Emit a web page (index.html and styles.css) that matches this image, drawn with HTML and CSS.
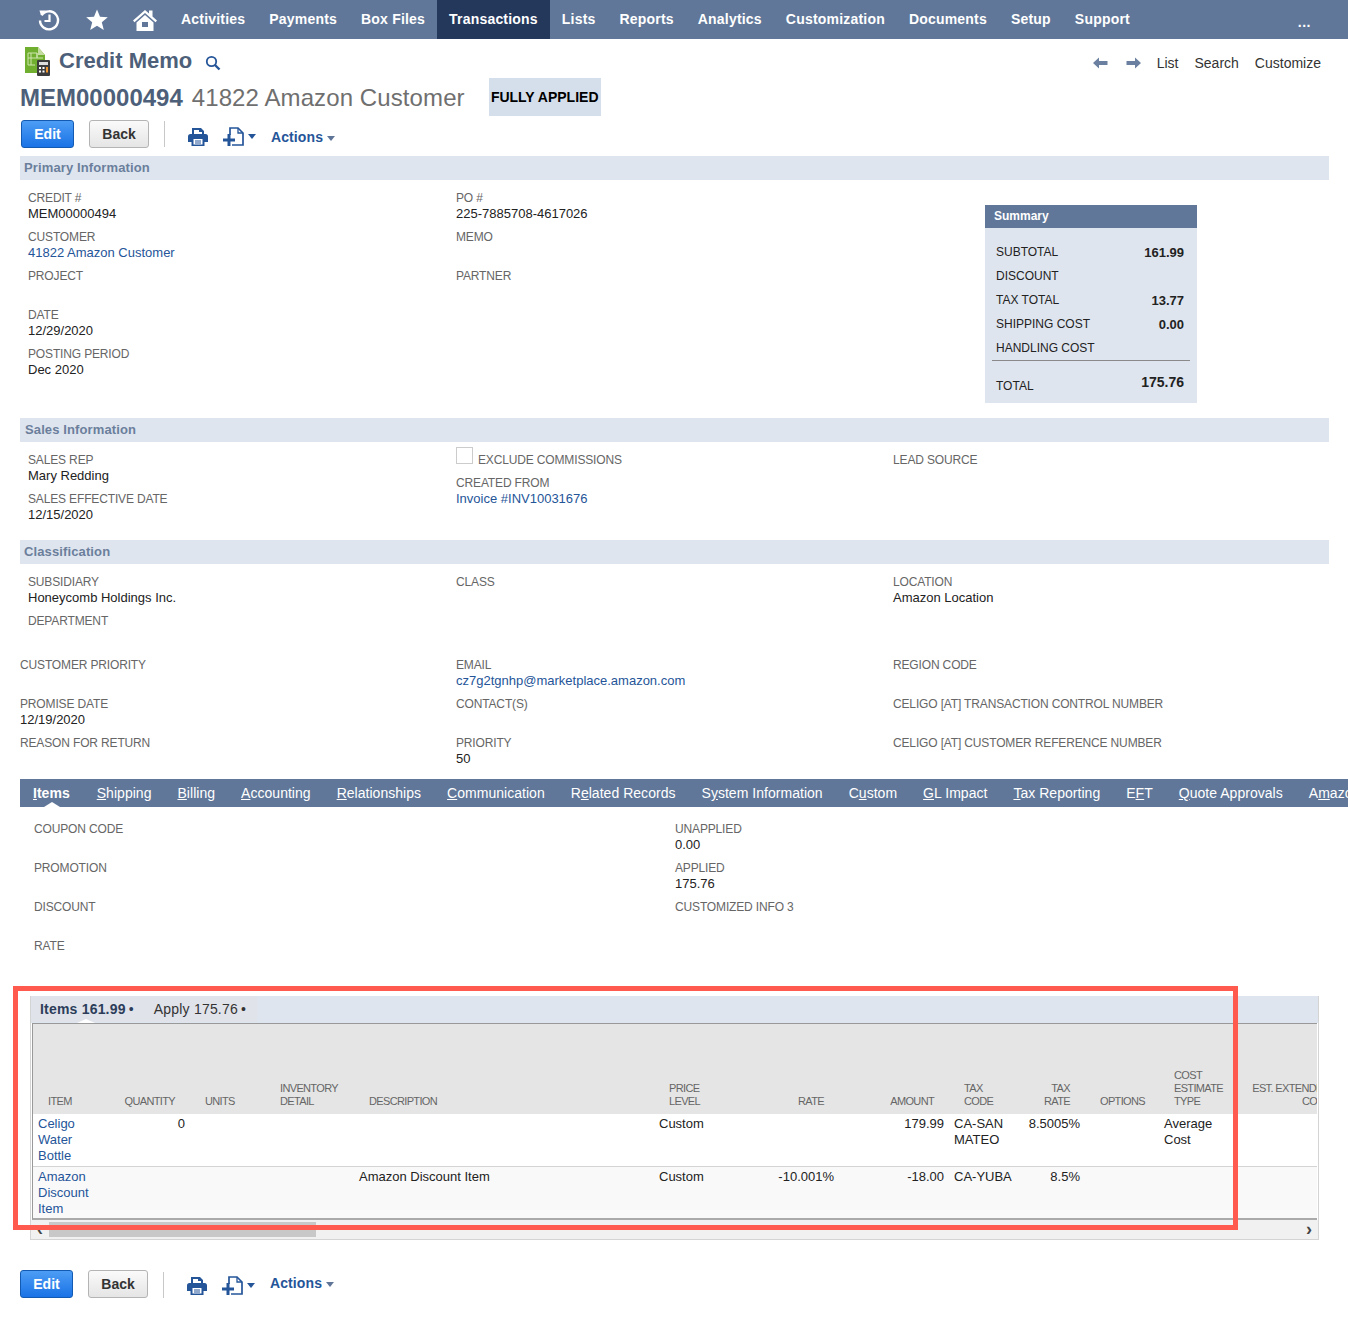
FILE: index.html
```html
<!DOCTYPE html>
<html lang="en">
<head>
    <meta charset="UTF-8">
    <meta name="viewport" content="width=device-width, initial-scale=1.0">
    <title>Credit Memo</title>
    <link rel="stylesheet" href="styles.css">
</head>
<body>
    <!-- Top navigation -->
    <nav class="topnav">
        <a class="nav-icon" href="#">
            <svg width="24" height="24" viewBox="0 0 24 24"><path d="M4.600 7.200A9 9 0 1 1 3 12.500" fill="none" stroke="#fff" stroke-width="2.400"/><path d="M2.500 2.500l6.500 0 -5 5z" fill="#fff"/><path d="M12.500 6.500v6.500h-5" fill="none" stroke="#fff" stroke-width="2.200"/></svg>
        </a>
        <a class="nav-icon" href="#">
            <svg width="24" height="24" viewBox="0 0 24 24"><path d="M12 1.500l3 7.300 7.800.5-6 5 2 7.700L12 17.700 5.200 22l2-7.700-6-5 7.800-.5z" fill="#fff"/></svg>
        </a>
        <a class="nav-icon" href="#">
            <svg width="26" height="24" viewBox="0 0 26 24"><path d="M1 12.500L13 2l4 3.500V2.500h3.500v6L25 12.500l-1.500 1.700L13 5 2.500 14.200z" fill="#fff"/><path d="M4.500 14.500L13 7l8.500 7.500V23h-17zM10 14v5h6v-5z" fill="#fff" fill-rule="evenodd"/></svg>
        </a>
        <a class="nav-link" href="#">Activities</a>
        <a class="nav-link" href="#">Payments</a>
        <a class="nav-link" href="#">Box Files</a>
        <a class="nav-link active" href="#">Transactions</a>
        <a class="nav-link" href="#">Lists</a>
        <a class="nav-link" href="#">Reports</a>
        <a class="nav-link" href="#">Analytics</a>
        <a class="nav-link" href="#">Customization</a>
        <a class="nav-link" href="#">Documents</a>
        <a class="nav-link" href="#">Setup</a>
        <a class="nav-link" href="#">Support</a>
        <a class="nav-more" href="#">...</a>
    </nav>

    <div class="page">
        <div class="title-row">
            <div class="title-left">
                <svg class="title-icon" width="27" height="30" viewBox="0 0 27 30">
                    <path d="M1 1h13l7 8v18H1z" fill="#6fae2e"/>
                    <path d="M14 1l7 8h-7z" fill="#c5dca0"/>
                    <path d="M4 7h9v5h6M4 7v12h7M7 7v12M4 12h9v-5" fill="none" stroke="#cfe5ae" stroke-width="1"/>
                    <rect x="13" y="14" width="13" height="16" rx="1" fill="#3c3c3c"/>
                    <rect x="15" y="16" width="9" height="3" fill="#ddd"/>
                    <path d="M15 21h2v2h-2zM18.500 21h2v2h-2zM15 24.500h2v2h-2zM18.500 24.500h2v2h-2z" fill="#fff"/>
                    <path d="M22 21h2v5.500h-2z" fill="#f0962e"/>
                </svg>
                <h1 class="page-title">Credit Memo</h1>
                <svg class="title-search" width="16" height="16" viewBox="0 0 16 16"><circle cx="6.500" cy="6.500" r="4.700" fill="none" stroke="#255599" stroke-width="1.800"/><path d="M10 10l4.500 4.500" stroke="#255599" stroke-width="2.400"/></svg>
            </div>
            <div class="title-links">
                <svg width="15" height="12" viewBox="0 0 15 12"><path d="M0 6l6-5.500V4h8.500v4H6v3.500z" fill="#6b80a0"/></svg>
                <svg class="arrow-next" width="15" height="12" viewBox="0 0 15 12"><path d="M15 6L9 .5V4H.5v4H9v3.500z" fill="#6b80a0"/></svg>
                <a href="#">List</a>
                <a href="#">Search</a>
                <a href="#">Customize</a>
            </div>
        </div>

        <div class="record-row">
            <span class="record-id">MEM00000494</span>
            <span class="record-name">41822 Amazon Customer</span>
            <span class="status">FULLY APPLIED</span>
        </div>

        <div class="toolbar">
            <button class="btn btn-primary">Edit</button>
            <button class="btn">Back</button>
            <span class="toolbar-sep"></span>
            <svg class="tool-print" width="20" height="19" viewBox="0 0 20 19"><path d="M4 1h9l3 3v4h-2V5h-3V3H6v5H4z" fill="#255599"/><path d="M2.500 7h15A2.500 2.500 0 0 1 20 9.500V15h-3.500v4h-13v-4H0V9.500A2.500 2.500 0 0 1 2.500 7z" fill="#255599"/><path d="M5.500 12h9v5.500h-9z" fill="#fff"/><path d="M7 14h6M7 16h6" stroke="#255599" stroke-width="1"/></svg>
            <svg class="tool-new" width="21" height="19" viewBox="0 0 21 19"><path d="M7 8V1h8l5 5v12H9" fill="none" stroke="#255599" stroke-width="1.700"/><path d="M15 1v5h5" fill="none" stroke="#255599" stroke-width="1.300"/><path d="M0 11.500h4.500V7h3v4.500H12v3H7.500V19h-3v-4.500H0z" fill="#255599"/></svg>
            <span class="caret caret-new"></span>
            <a class="actions" href="#">Actions<span class="caret caret-grey"></span></a>
        </div>

        <!-- Primary Information -->
        <h2 class="section-bar">Primary Information</h2>
        <div class="field-grid primary">
            <div>
                <div class="field"><div class="label">CREDIT #</div><div class="value">MEM00000494</div></div>
                <div class="field"><div class="label">CUSTOMER</div><div class="value"><a href="#">41822 Amazon Customer</a></div></div>
                <div class="field"><div class="label">PROJECT</div></div>
                <div class="field"><div class="label">DATE</div><div class="value">12/29/2020</div></div>
                <div class="field"><div class="label">POSTING PERIOD</div><div class="value">Dec 2020</div></div>
            </div>
            <div>
                <div class="field"><div class="label">PO #</div><div class="value">225-7885708-4617026</div></div>
                <div class="field"><div class="label">MEMO</div></div>
                <div class="field"><div class="label">PARTNER</div></div>
            </div>
            <div class="summary">
                <div class="summary-head">Summary</div>
                <div class="summary-body">
                    <div class="summary-row"><span>SUBTOTAL</span><b>161.99</b></div>
                    <div class="summary-row"><span>DISCOUNT</span></div>
                    <div class="summary-row"><span>TAX TOTAL</span><b>13.77</b></div>
                    <div class="summary-row"><span>SHIPPING COST</span><b>0.00</b></div>
                    <div class="summary-row"><span>HANDLING COST</span></div>
                    <div class="summary-total"><span>TOTAL</span><b>175.76</b></div>
                </div>
            </div>
        </div>

        <!-- Sales Information -->
        <h2 class="section-bar sales-bar">Sales Information</h2>
        <div class="field-grid sales">
            <div>
                <div class="field"><div class="label">SALES REP</div><div class="value">Mary Redding</div></div>
                <div class="field"><div class="label">SALES EFFECTIVE DATE</div><div class="value">12/15/2020</div></div>
            </div>
            <div>
                <div class="check-field"><span class="checkbox"></span><span class="label">EXCLUDE COMMISSIONS</span></div>
                <div class="field"><div class="label">CREATED FROM</div><div class="value"><a href="#">Invoice #INV10031676</a></div></div>
            </div>
            <div>
                <div class="field"><div class="label">LEAD SOURCE</div></div>
            </div>
        </div>

        <!-- Classification -->
        <h2 class="section-bar">Classification</h2>
        <div class="field-grid classification">
            <div>
                <div class="field"><div class="label">SUBSIDIARY</div><div class="value">Honeycomb Holdings Inc.</div></div>
                <div class="field"><div class="label">DEPARTMENT</div></div>
            </div>
            <div>
                <div class="field"><div class="label">CLASS</div></div>
            </div>
            <div>
                <div class="field"><div class="label">LOCATION</div><div class="value">Amazon Location</div></div>
            </div>
        </div>

        <div class="field-grid other">
            <div>
                <div class="field"><div class="label">CUSTOMER PRIORITY</div></div>
                <div class="field"><div class="label">PROMISE DATE</div><div class="value">12/19/2020</div></div>
                <div class="field"><div class="label">REASON FOR RETURN</div></div>
            </div>
            <div>
                <div class="field"><div class="label">EMAIL</div><div class="value"><a href="#">cz7g2tgnhp@marketplace.amazon.com</a></div></div>
                <div class="field"><div class="label">CONTACT(S)</div></div>
                <div class="field"><div class="label">PRIORITY</div><div class="value">50</div></div>
            </div>
            <div>
                <div class="field"><div class="label">REGION CODE</div></div>
                <div class="field"><div class="label">CELIGO [AT] TRANSACTION CONTROL NUMBER</div></div>
                <div class="field"><div class="label">CELIGO [AT] CUSTOMER REFERENCE NUMBER</div></div>
            </div>
        </div>

        <!-- Tabs -->
        <div class="tabs">
            <a class="tab active" href="#"><u>I</u>tems</a>
            <a class="tab" href="#"><u>S</u>hipping</a>
            <a class="tab" href="#"><u>B</u>illing</a>
            <a class="tab" href="#"><u>A</u>ccounting</a>
            <a class="tab" href="#"><u>R</u>elationships</a>
            <a class="tab" href="#"><u>C</u>ommunication</a>
            <a class="tab" href="#">R<u>e</u>lated Records</a>
            <a class="tab" href="#">S<u>y</u>stem Information</a>
            <a class="tab" href="#">C<u>u</u>stom</a>
            <a class="tab" href="#"><u>G</u>L Impact</a>
            <a class="tab" href="#"><u>T</u>ax Reporting</a>
            <a class="tab" href="#">E<u>F</u>T</a>
            <a class="tab" href="#"><u>Q</u>uote Approvals</a>
            <a class="tab" href="#">A<u>m</u>azon</a>
        </div>

        <div class="field-grid items-fields">
            <div>
                <div class="field"><div class="label">COUPON CODE</div></div>
                <div class="field"><div class="label">PROMOTION</div></div>
                <div class="field"><div class="label">DISCOUNT</div></div>
                <div class="field"><div class="label">RATE</div></div>
            </div>
            <div>
                <div class="field"><div class="label">UNAPPLIED</div><div class="value">0.00</div></div>
                <div class="field"><div class="label">APPLIED</div><div class="value">175.76</div></div>
                <div class="field"><div class="label">CUSTOMIZED INFO 3</div></div>
            </div>
        </div>

        <!-- Item sublist -->
        <div class="sublist">
            <div class="subtabs">
                <div class="subtab-group">
                    <a class="subtab active" href="#">Items 161.99<span class="dot">•</span></a>
                    <a class="subtab" href="#">Apply 175.76<span class="dot">•</span></a>
                </div>
            </div>
            <div class="table-wrap">
                <table class="items">
                    <colgroup>
                        <col class="c-item"><col class="c-qty"><col class="c-units"><col class="c-inv"><col class="c-desc"><col class="c-price"><col class="c-rate"><col class="c-amount"><col class="c-code"><col class="c-taxrate"><col class="c-opt"><col class="c-cost"><col class="c-ext">
                    </colgroup>
                    <thead>
                        <tr>
                            <th>ITEM</th>
                            <th class="num">QUANTITY</th>
                            <th>UNITS</th>
                            <th>INVENTORY<br>DETAIL</th>
                            <th>DESCRIPTION</th>
                            <th>PRICE<br>LEVEL</th>
                            <th class="num">RATE</th>
                            <th class="num">AMOUNT</th>
                            <th>TAX<br>CODE</th>
                            <th class="num">TAX<br>RATE</th>
                            <th>OPTIONS</th>
                            <th>COST<br>ESTIMATE<br>TYPE</th>
                            <th class="num">EST. EXTENDED<br>COST</th>
                        </tr>
                    </thead>
                    <tbody>
                        <tr>
                            <td><a href="#">Celigo Water Bottle</a></td>
                            <td class="num">0</td>
                            <td></td>
                            <td></td>
                            <td></td>
                            <td>Custom</td>
                            <td></td>
                            <td class="num">179.99</td>
                            <td>CA-SAN MATEO</td>
                            <td class="num">8.5005%</td>
                            <td></td>
                            <td>Average Cost</td>
                            <td></td>
                        </tr>
                        <tr class="alt">
                            <td><a href="#">Amazon Discount Item</a></td>
                            <td></td>
                            <td></td>
                            <td></td>
                            <td>Amazon Discount Item</td>
                            <td>Custom</td>
                            <td class="num">-10.001%</td>
                            <td class="num">-18.00</td>
                            <td>CA-YUBA</td>
                            <td class="num">8.5%</td>
                            <td></td>
                            <td></td>
                            <td></td>
                        </tr>
                    </tbody>
                </table>
            </div>
            <div class="hscroll">
                <span class="scroll-arrow">‹</span>
                <span class="scroll-thumb"></span>
                <span class="scroll-arrow">›</span>
            </div>
        </div>

        <div class="toolbar toolbar-bottom">
            <button class="btn btn-primary">Edit</button>
            <button class="btn">Back</button>
            <span class="toolbar-sep"></span>
            <svg class="tool-print" width="20" height="19" viewBox="0 0 20 19"><path d="M4 1h9l3 3v4h-2V5h-3V3H6v5H4z" fill="#255599"/><path d="M2.500 7h15A2.500 2.500 0 0 1 20 9.500V15h-3.500v4h-13v-4H0V9.500A2.500 2.500 0 0 1 2.500 7z" fill="#255599"/><path d="M5.500 12h9v5.500h-9z" fill="#fff"/><path d="M7 14h6M7 16h6" stroke="#255599" stroke-width="1"/></svg>
            <svg class="tool-new" width="21" height="19" viewBox="0 0 21 19"><path d="M7 8V1h8l5 5v12H9" fill="none" stroke="#255599" stroke-width="1.700"/><path d="M15 1v5h5" fill="none" stroke="#255599" stroke-width="1.300"/><path d="M0 11.500h4.500V7h3v4.500H12v3H7.500V19h-3v-4.500H0z" fill="#255599"/></svg>
            <span class="caret caret-new"></span>
            <a class="actions" href="#">Actions<span class="caret caret-grey"></span></a>
        </div>
    </div>

    <!-- Red annotation drawn over the screenshot -->
    <div class="annotation"></div>
</body>
</html>
```

FILE: styles.css
```css
* {
    box-sizing: border-box;
}

html, body {
    margin: 0;
    padding: 0;
}

body {
    position: relative;
    width: 1348px;
    height: 1319px;
    overflow: hidden;
    background: white;
    font-family: "Liberation Sans", Arial, sans-serif;
    font-size: 14px;
    color: #222;
}

a {
    color: inherit;
    text-decoration: none;
}

/* top nav */
.topnav {
    display: flex;
    align-items: stretch;
    height: 39px;
    padding-left: 25px;
    background: #607799;
}

.nav-icon {
    display: flex;
    align-items: center;
    justify-content: center;
    width: 48px;
}

.nav-link {
    display: flex;
    align-items: center;
    padding: 0 12px 2px;
    color: white;
    font-weight: bold;
    font-size: 14px;
    letter-spacing: 0.2px;
}

.nav-link.active {
    background: #24385c;
}

.nav-more {
    margin-left: auto;
    padding: 0 37px 0 0;
    color: white;
    font-weight: bold;
    font-size: 14px;
    line-height: 44px;
    letter-spacing: 0.5px;
}

/* page header */
.page {
    padding-left: 20px;
}

.title-row {
    display: flex;
    justify-content: space-between;
    height: 39px;
    padding-right: 27px;
}

.title-left {
    display: flex;
    align-items: center;
    padding-top: 4px;
}

.title-icon {
    margin-left: 4px;
    margin-top: 1px;
}

.page-title {
    margin: 0 0 0 8px;
    font-size: 22px;
    font-weight: bold;
    color: #4d5f79;
}

.title-search {
    margin: 5px 0 0 13px;
}

.title-links {
    display: flex;
    align-items: center;
    padding-top: 9px;
    color: #333;
}

.title-links a {
    margin-left: 16px;
}

.arrow-next {
    margin-left: 18px;
}

.record-row {
    display: flex;
    align-items: center;
    height: 38px;
}

.record-id {
    padding-top: 2px;
    font-size: 24px;
    font-weight: bold;
    color: #4d5f79;
}

.record-name {
    margin-left: 9px;
    padding-top: 2px;
    font-size: 24px;
    letter-spacing: 0.1px;
    color: #6f6f6f;
}

.status {
    display: flex;
    align-items: center;
    justify-content: center;
    width: 112px;
    height: 38px;
    margin-left: 24px;
    background: #d5dfeb;
    color: black;
    font-weight: bold;
}

/* toolbar */
.toolbar {
    display: flex;
    align-items: center;
    height: 40px;
    padding: 0 0 0 1px;
}

.btn {
    width: 60px;
    height: 28px;
    margin: -4px 0 0 15px;
    padding: 0;
    border: 1px solid #b4b4b4;
    border-radius: 3px;
    background: linear-gradient(#fafafa, #e5e5e5);
    font-family: inherit;
    font-size: 14px;
    font-weight: bold;
    color: #333;
}

.btn-primary {
    width: 53px;
    margin-left: 0;
    border-color: #125ab2;
    background: linear-gradient(#4d9df5, #1a73e6);
    color: white;
}

.toolbar-sep {
    width: 1px;
    height: 26px;
    margin: -5px 0 0 15px;
    background: #c8c8c8;
}

.tool-print {
    margin-left: 23px;
}

.tool-new {
    margin-left: 15px;
}

.caret {
    display: inline-block;
    width: 0;
    height: 0;
    border-left: 4px solid transparent;
    border-right: 4px solid transparent;
    border-top: 5px solid #255599;
}

.caret-new {
    margin-left: 4px;
}

.caret-grey {
    margin-left: 4px;
    border-top-color: #5f7598;
    vertical-align: 1px;
}

.actions {
    margin: 2px 0 0 15px;
    color: #255599;
    font-weight: bold;
    letter-spacing: 0.1px;
}

/* section bars */
.section-bar {
    width: 1309px;
    height: 24px;
    margin: 0;
    padding-left: 4px;
    background: #dfe5ef;
    color: #6b7f9c;
    font-size: 13px;
    font-weight: bold;
    letter-spacing: 0.12px;
    line-height: 23px;
}

.sales-bar {
    padding-left: 5px;
}

/* field layout */
.field-grid {
    display: grid;
    grid-template-columns: 436px 437px 1fr;
}

.primary,
.sales,
.classification {
    padding-top: 10px;
}

.primary {
    margin-bottom: 15px;
}

.sales {
    margin-bottom: 10px;
}

.primary > div:first-child,
.sales > div:first-child,
.classification > div:first-child {
    padding-left: 8px;
}

.classification {
    margin-bottom: 5px;
}

.other {
    margin-bottom: 5px;
}

.field {
    height: 39px;
}

.label {
    font-size: 12px;
    line-height: 16px;
    letter-spacing: -0.15px;
    color: #666;
}

.value {
    font-size: 13px;
    line-height: 16px;
    color: #222;
}

.value a {
    color: #255599;
}

.check-field {
    display: flex;
    align-items: flex-start;
    height: 23px;
}

.checkbox {
    width: 17px;
    height: 17px;
    margin-top: -5px;
    margin-right: 5px;
    border: 1px solid #ccc;
    background: white;
}

/* summary box */
.summary {
    width: 212px;
    height: 198px;
    margin: 15px 0 0 92px;
    background: #dfe5ef;
}

.summary-head {
    height: 23px;
    padding-left: 9px;
    background: #607799;
    color: white;
    font-size: 12px;
    font-weight: bold;
    line-height: 22px;
}

.summary-body {
    padding: 12px 7px 0;
}

.summary-row {
    display: flex;
    justify-content: space-between;
    align-items: center;
    height: 24px;
    padding: 0 6px 0 4px;
    font-size: 12px;
}

.summary-row b {
    font-size: 13px;
}

.summary-total b {
    font-size: 14px;
}

.summary-total {
    display: flex;
    justify-content: space-between;
    padding: 13px 6px 0 4px;
    border-top: 1px solid #8a8a8a;
    font-size: 12px;
    line-height: 16px;
}

.summary-total span {
    padding-top: 4px;
}

/* tabs */
.tabs {
    display: flex;
    gap: 26px;
    width: 1328px;
    height: 28px;
    padding-left: 13px;
    overflow: hidden;
    background: #607799;
    color: white;
    letter-spacing: 0.03px;
    line-height: 28px;
    white-space: nowrap;
}

.tab {
    position: relative;
    flex: none;
}

.tab.active {
    padding-right: 1px;
    font-weight: bold;
}

.tab.active::after {
    content: "";
    position: absolute;
    left: 50%;
    bottom: 0;
    margin-left: -8px;
    border-left: 8px solid transparent;
    border-right: 8px solid transparent;
    border-bottom: 5px solid white;
}

.items-fields {
    grid-template-columns: 641px 1fr;
    padding: 14px 0 19px 14px;
}

/* sublist */
.sublist {
    width: 1289px;
    margin-left: 10px;
    border: 1px solid #d4d4d4;
    border-top: none;
}

.subtabs {
    height: 27px;
    background: #dfe5ef;
}

.subtab-group {
    display: flex;
    width: 226px;
    height: 26px;
    background: #e1e3ea;
}

.subtab {
    position: relative;
    flex: none;
    padding-left: 9px;
    margin-right: 11px;
    line-height: 26px;
    letter-spacing: 0.2px;
    white-space: nowrap;
    color: #333;
}

.subtab.active {
    font-weight: bold;
    color: #2c3e5a;
}

.subtab.active::after {
    content: "";
    position: absolute;
    left: 46px;
    bottom: -1px;
    border-left: 9px solid transparent;
    border-right: 9px solid transparent;
    border-bottom: 4px solid white;
}

.dot {
    margin-left: 3px;
    font-weight: normal;
}

.table-wrap {
    margin: 0 1px;
    overflow: hidden;
    border: 1px solid #999;
    border-width: 1px 0 2px 1px;
    border-bottom-color: #aaa;
}

.items {
    width: 1312px;
    table-layout: fixed;
    border-collapse: collapse;
    font-size: 13px;
}

.c-item { width: 80px; }
.c-qty { width: 77px; }
.c-units { width: 75px; }
.c-inv { width: 89px; }
.c-desc { width: 300px; }
.c-price { width: 106px; }
.c-rate { width: 79px; }
.c-amount { width: 110px; }
.c-code { width: 70px; }
.c-taxrate { width: 66px; }
.c-opt { width: 74px; }
.c-cost { width: 82px; }
.c-ext { width: 104px; }

.items th {
    height: 90px;
    padding: 0 5px 6px 15px;
    vertical-align: bottom;
    background: #e5e5e5;
    color: #666;
    font-size: 11px;
    font-weight: normal;
    line-height: 13px;
    letter-spacing: -0.65px;
    text-align: left;
    white-space: nowrap;
}

.items th.num {
    padding: 0 15px 6px 5px;
    text-align: right;
}

.items td {
    height: 52px;
    padding: 2px 5px 0;
    vertical-align: top;
    line-height: 16px;
    color: #222;
}

.items td a {
    color: #255599;
}

.items td.num {
    text-align: right;
}

.items tbody tr:first-child td {
    border-bottom: 1px solid #d4d4d4;
}

.items tr.alt td {
    background: #f9f9f9;
}

.hscroll {
    position: relative;
    display: flex;
    align-items: center;
    justify-content: space-between;
    height: 19px;
    padding: 0 6px;
    background: #f1f1f1;
    font-size: 18px;
    font-weight: bold;
    color: #444;
}

.scroll-thumb {
    position: absolute;
    top: 2px;
    left: 18px;
    width: 267px;
    height: 15px;
    background: #c8c8c8;
}

.toolbar-bottom {
    height: 28px;
    margin-top: 30px;
    padding-left: 0;
}

.toolbar-bottom .btn {
    margin-top: 0;
}

.toolbar-bottom .toolbar-sep {
    margin-top: 2px;
}

.toolbar-bottom .tool-print,
.toolbar-bottom .tool-new,
.toolbar-bottom .caret-new {
    margin-top: 2px;
}

.toolbar-bottom .actions {
    margin-top: -2px;
}

.annotation {
    position: absolute;
    left: 13px;
    top: 986px;
    width: 1225px;
    height: 244px;
    border: 5px solid #ff5a4d;
    pointer-events: none;
}
```
